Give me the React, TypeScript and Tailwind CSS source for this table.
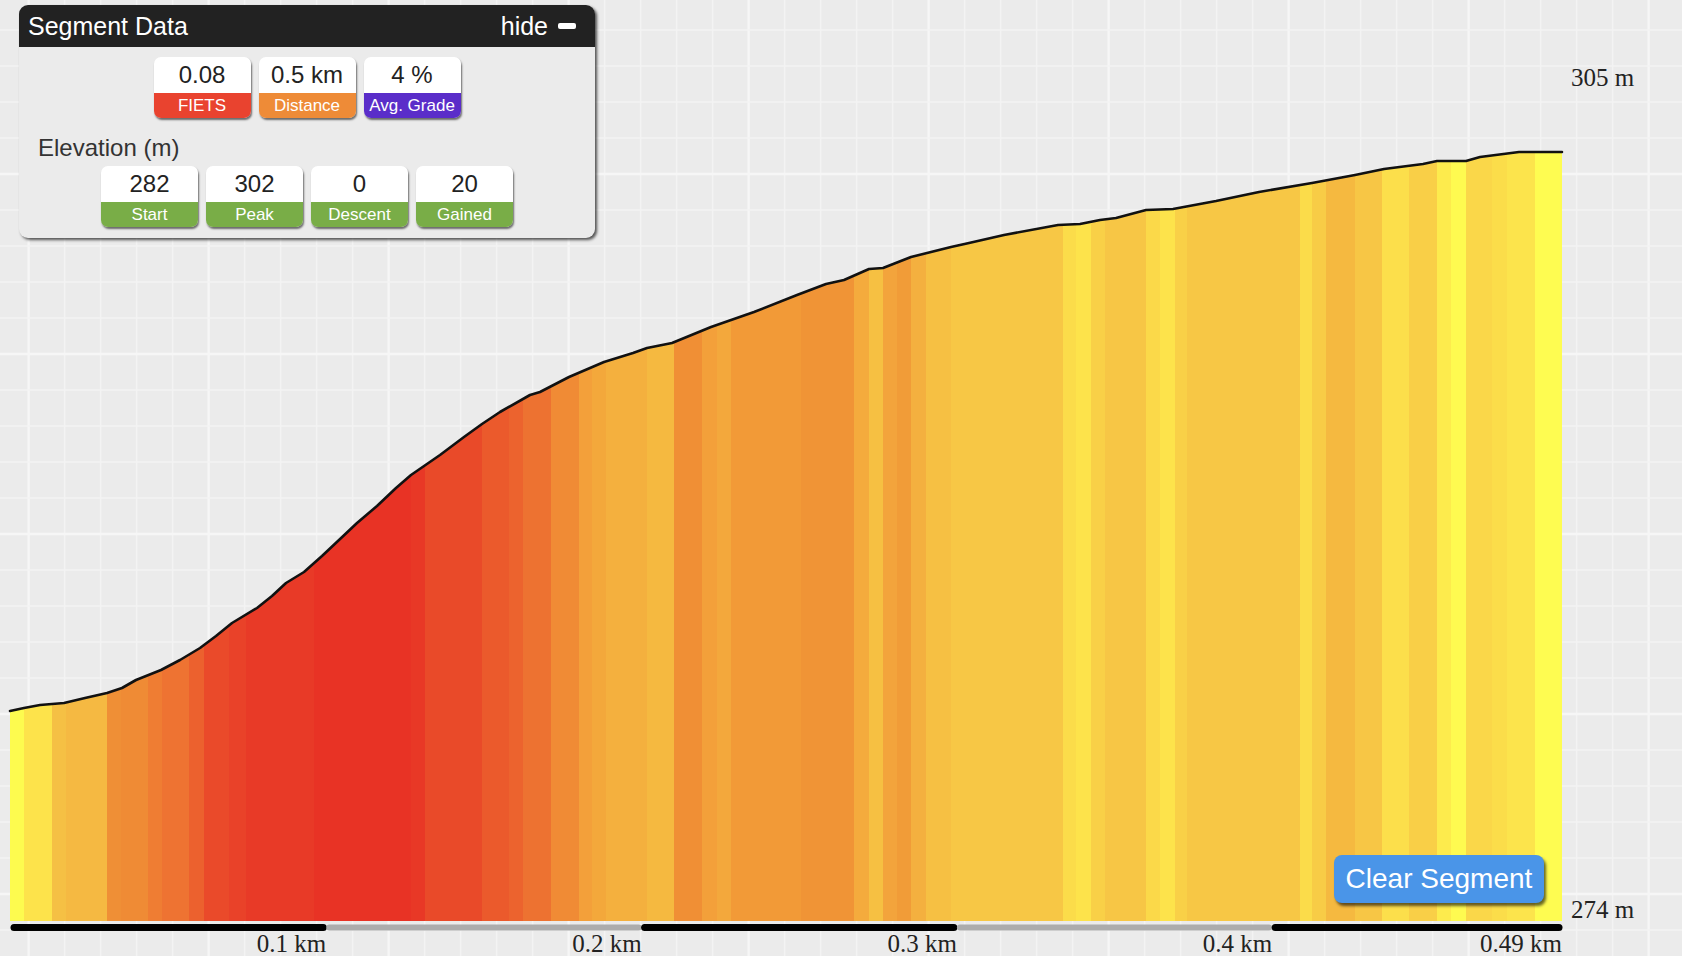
import { clsx } from "clsx";

// grade stripes: [start x, colour], each runs to the next start
const stripes: [number, string][] = [
  [10, "#fdfb4f"], [24, "#fde34b"], [52, "#f5c044"], [66, "#f5b942"],
  [107, "#ef8f36"], [121, "#ef8b35"], [148, "#ef7d33"], [162, "#ee7332"],
  [189, "#ec612e"], [204, "#ea4a2a"], [229, "#e94229"], [246, "#e83a27"],
  [314, "#e83325"], [411, "#e83826"], [425, "#e94a29"], [482, "#eb5a2c"],
  [509, "#ec632e"], [523, "#ed7231"], [551, "#f08b35"], [579, "#f3a03a"],
  [592, "#f3a83b"], [606, "#f4b03e"], [647, "#f5b940"], [674, "#f08f35"],
  [702, "#f3a03a"], [717, "#f3a83c"], [731, "#f29a37"], [801, "#f09436"],
  [854, "#f4ab3d"], [869, "#f6c042"], [883, "#f3a43c"], [897, "#f19c38"],
  [911, "#f4b03f"], [926, "#f6c043"], [951, "#f7c745"], [1063, "#fbdc4a"],
  [1076, "#fde34b"], [1091, "#f9d047"], [1105, "#f7c645"], [1146, "#fbd949"],
  [1160, "#fde34b"], [1175, "#f9d047"], [1187, "#f7c745"], [1300, "#fbdc4a"],
  [1312, "#f8cc46"], [1326, "#f5b940"], [1355, "#f7c645"], [1382, "#fcdf4b"],
  [1409, "#f9cf47"], [1437, "#fdeb4d"], [1451, "#fefa50"], [1466, "#fad749"],
  [1492, "#fbdd4a"], [1507, "#fce44c"], [1535, "#fefc51"],
];

const profile: [number, number][] = [
  [10, 711], [24, 708], [40, 705], [64, 703], [85, 698], [107, 693], [122, 688],
  [136, 680], [161, 670], [180, 660], [200, 648], [216, 636], [232, 623],
  [257, 608], [272, 596], [286, 583], [304, 572], [322, 556], [339, 540],
  [357, 523], [377, 506], [396, 488], [411, 475], [440, 455], [464, 437],
  [482, 424], [500, 412], [530, 395], [540, 392], [569, 377], [604, 362],
  [633, 353], [647, 348], [672, 343], [711, 327], [754, 312], [797, 295],
  [826, 284], [844, 280], [869, 269], [883, 268], [911, 257], [951, 247],
  [969, 243], [1004, 235], [1058, 225], [1080, 224], [1100, 220], [1116, 218],
  [1146, 210], [1173, 209], [1216, 201], [1259, 192], [1312, 183], [1355, 175],
  [1384, 169], [1423, 164], [1437, 161], [1466, 161], [1480, 157], [1519, 152],
  [1562, 152],
];

const CHART_LEFT = 10;
const CHART_RIGHT = 1562;
const BASE_Y = 921;
const KM_PX = 315.3;

const ticks = [
  { x: CHART_LEFT + 1 + KM_PX, label: "0.1 km" },
  { x: CHART_LEFT + 1 + KM_PX * 2, label: "0.2 km" },
  { x: CHART_LEFT + 1 + KM_PX * 3, label: "0.3 km" },
  { x: CHART_LEFT + 1 + KM_PX * 4, label: "0.4 km" },
  { x: CHART_RIGHT, label: "0.49 km" },
];

const ElevationChart = () => {
  const line = profile.map(([x, y]) => `${x},${y}`).join(" ");
  const area = `${line} ${CHART_RIGHT},${BASE_Y} ${CHART_LEFT},${BASE_Y}`;

  const vLines = Array.from({ length: 47 }, (_, k) => 28.6 + 36 * k);
  const hLines = Array.from({ length: 27 }, (_, k) => -6 + 36 * k);

  // axis bar alternates black / grey every 0.1 km
  const bars = [CHART_LEFT + 1, ...ticks.map((t) => t.x)];

  return (
    <svg width={1682} height={956} className="block">
      {vLines.map((x, k) => (
        <line
          key={`v${k}`}
          x1={x}
          x2={x}
          y1={0}
          y2={956}
          stroke={k % 5 === 0 ? "#f6f6f6" : "#f3f3f3"}
          strokeWidth={k % 5 === 0 ? 2.4 : 1.4}
        />
      ))}
      {hLines.map((y, k) => (
        <line
          key={`h${k}`}
          x1={0}
          x2={1682}
          y1={y}
          y2={y}
          stroke={k % 5 === 0 ? "#f6f6f6" : "#f3f3f3"}
          strokeWidth={k % 5 === 0 ? 2.4 : 1.4}
        />
      ))}

      <defs>
        <clipPath id="profile-area">
          <polygon points={area} />
        </clipPath>
      </defs>

      <g clipPath="url(#profile-area)">
        {stripes.map(([x, color], i) => {
          const next = i < stripes.length - 1 ? stripes[i + 1][0] : CHART_RIGHT;
          return (
            <rect key={x} x={x} y={0} width={next - x + 0.5} height={BASE_Y} fill={color} />
          );
        })}
      </g>

      <polyline
        points={line}
        fill="none"
        stroke="#111"
        strokeWidth={2.6}
        strokeLinejoin="round"
        strokeLinecap="round"
      />

      {bars.slice(0, -1).map((x, i) => (
        <line
          key={`b${i}`}
          x1={x + 3}
          x2={bars[i + 1] - 3}
          y1={927.5}
          y2={927.5}
          stroke={i % 2 === 0 ? "#000" : "#acacac"}
          strokeWidth={i % 2 === 0 ? 7 : 6}
          strokeLinecap="round"
        />
      ))}

      <g fontFamily="'Liberation Serif', 'Times New Roman', serif" fontSize={25} fill="#222">
        <text x={1571} y={86}>305 m</text>
        <text x={1571} y={918}>274 m</text>
        {ticks.map((t) => (
          <text key={t.label} x={t.x} y={952} textAnchor="end">
            {t.label}
          </text>
        ))}
      </g>
    </svg>
  );
};

const StatBox = ({
  value,
  label,
  color,
}: {
  value: string;
  label: string;
  color: string;
}) => (
  <div className="w-[97px] rounded-[7px] overflow-hidden shadow-[1px_2px_2px_rgba(0,0,0,0.55)]">
    <div className="h-[36px] bg-white flex items-center justify-center text-[24px] leading-none text-[#222]">
      {value}
    </div>
    <div
      className={clsx(
        "h-[25px] flex items-center justify-center text-[17px] leading-none text-white",
        color
      )}
    >
      {label}
    </div>
  </div>
);

const summary = [
  { value: "0.08", label: "FIETS", color: "bg-[#e9432f]" },
  { value: "0.5 km", label: "Distance", color: "bg-[#ee8b37]" },
  { value: "4 %", label: "Avg. Grade", color: "bg-[#5a2dc9]" },
];

const elevation = [
  { value: "282", label: "Start" },
  { value: "302", label: "Peak" },
  { value: "0", label: "Descent" },
  { value: "20", label: "Gained" },
];

const SegmentPanel = () => (
  <div className="absolute left-[19px] top-[5px] w-[576px] rounded-[9px] bg-[#ebebeb] shadow-[2px_2px_3px_rgba(0,0,0,0.65)] overflow-hidden">
    <div className="h-[42px] bg-[#222] flex items-center justify-between pl-[9px] pr-[19px] text-white text-[25px] leading-none">
      <span>Segment Data</span>
      <div className="flex items-center gap-[10px]">
        <span>hide</span>
        <span className="block w-[18px] h-[6px] rounded-[2px] bg-white" />
      </div>
    </div>
    <div className="pt-[10px] pb-[11px]">
      <div className="flex justify-center gap-[8px]">
        {summary.map((s) => (
          <StatBox key={s.label} {...s} />
        ))}
      </div>
      <div className="mt-[16px] mb-[4px] pl-[19px] h-[28px] flex items-center text-[24px] leading-none text-[#333]">
        Elevation (m)
      </div>
      <div className="flex justify-center gap-[8px]">
        {elevation.map((s) => (
          <StatBox key={s.label} {...s} color="bg-[#79ad47]" />
        ))}
      </div>
    </div>
  </div>
);

export default function App() {
  return (
    <div className="relative w-[1682px] h-[956px] overflow-hidden bg-[#ebebeb] font-['Liberation_Sans',Arial,sans-serif]">
      <ElevationChart />
      <SegmentPanel />
      <button
        type="button"
        className="absolute left-[1334px] top-[855px] w-[210px] h-[48px] rounded-[8px] bg-[#4a95e8] text-white text-[28px] leading-none flex items-center justify-center shadow-[2px_3px_3px_rgba(0,0,0,0.6)]"
      >
        Clear Segment
      </button>
    </div>
  );
}
